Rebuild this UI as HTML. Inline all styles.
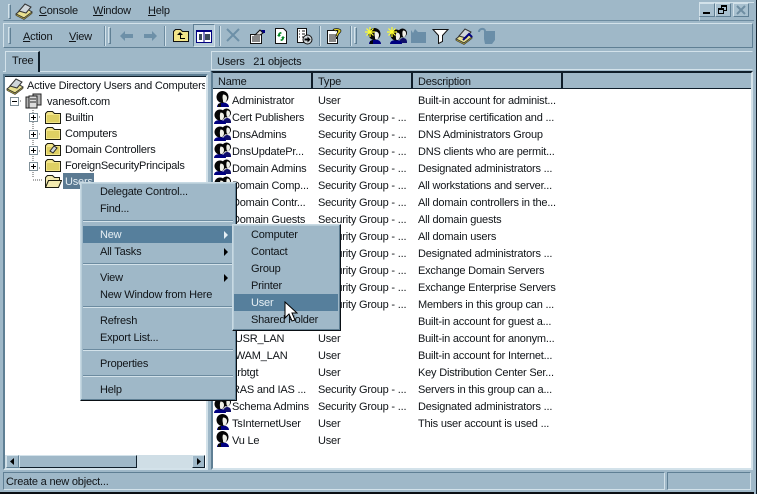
<!DOCTYPE html>
<html><head><meta charset="utf-8"><style>
html,body{margin:0;padding:0}
#r{position:relative;width:757px;height:494px;overflow:hidden;background:#9fb8c8;font:11px "Liberation Sans",sans-serif;letter-spacing:-.2px;color:#101418}
#r div,#r span,#r svg{position:absolute}
.t{line-height:14px;white-space:nowrap;margin-top:1px}
u{text-decoration:underline}
.rs{border:1px solid;border-color:#d3e2ea #5f7f94 #5f7f94 #d3e2ea;box-sizing:border-box}
.sk{border:1px solid;border-color:#5f7f94 #d3e2ea #d3e2ea #5f7f94;box-sizing:border-box}
.gr{width:3px;background:#9fb8c8;border:1px solid;border-color:#d3e2ea #5f7f94 #5f7f94 #d3e2ea;box-sizing:border-box}
.sep{width:2px;border-left:1px solid #6c8ba0;border-right:1px solid #d3e2ea;box-sizing:border-box}
.menu{background:#9fb8c8;border:1px solid;border-color:#c8dae4 #0a0f14 #0a0f14 #c8dae4;box-sizing:border-box;box-shadow:inset -1px -1px 0 #5f7f94,inset 1px 1px 0 #b9ced9}
.hs{height:2px;left:3px;border-top:1px solid #6c8ba0;border-bottom:1px solid #d3e2ea;box-sizing:border-box}
.hl{background:#567f9c}
.w{color:#e6eff4}
</style></head><body><div id="r">
<svg width="0" height="0" style="left:0;top:0"><defs>
<g id="user"><path d="M2 16c0-3 3-4.500 6-4.500s6 1.500 6 4.500z" fill="#000080"/><ellipse cx="7.500" cy="6" rx="6" ry="6" fill="#050505"/><path d="M8 3.500c2.500 0 4 1.500 4 3.500s-1 4.500-2.500 4.500S8 10.500 8 9.500 7 6.500 8 3.500z" fill="#f0f0e8"/><path d="M3 13l3-1v4H3z" fill="#050505"/></g>
<g id="group"><path d="M9 15c0-3 2-5 4-5s4 1 4 4v1z" fill="#10106a"/><ellipse cx="12.500" cy="5" rx="4.500" ry="4.500" fill="#050505"/><path d="M13 2.500c2 0 3 1 3 3s-1 3.500-2 3.500-1.500-1-1.500-2-.5-2.500.5-4.500z" fill="#f0f0e8"/><path d="M0 16c0-3 3-4 6-4s6 1 6 4z" fill="#000080"/><ellipse cx="6" cy="7" rx="5.500" ry="5.500" fill="#050505"/><path d="M6.500 4.500c2.500 0 3.500 1.500 3.500 3.500s-1 4-2.500 4S6 11 6 10 5.500 7 6.500 4.500z" fill="#f0f0e8"/></g>
<g id="folder"><path d="M1.500 14.500V4.500l2-2h5l2 2h6v10z" fill="#f2e58a" stroke="#1c1c10"/><path d="M3 6h12v7H3z" fill="#ded063"/></g>
<g id="book"><path d="M1 12L9 5l8 5-8 6z" fill="#e8e090" stroke="#333"/><path d="M4 9l6-7 6 3-5 6z" fill="#cfd6da" stroke="#333"/><path d="M1 12l8 4 8-6v1.500l-8 6-8-4z" fill="#b5a83c" stroke="#333" stroke-width=".6"/></g>
<g id="srv"><path d="M2 5h8v11H2zM9 2h8v11H9z" fill="#b4b4b4" stroke="#222"/><path d="M5 4h8v12H5z" fill="#dcdcdc" stroke="#222"/><path d="M6 7h6M6 10h6" stroke="#222"/></g>
<g id="plus"><rect x=".5" y=".5" width="8" height="8" fill="#fff" stroke="#7f8f98"/><path d="M2 4.500h5M4.500 2v5" stroke="#000"/></g>
</defs></svg>

<!-- menu band -->
<div class="rs" style="left:3px;top:2px;width:751px;height:19px;border-color:#9fb8c8 #9fb8c8 #6c8ba0 #9fb8c8"></div>
<div class="gr" style="left:8px;top:4px;height:15px"></div>
<svg style="left:15px;top:2px" width="18" height="18"><use href="#book"/></svg>
<span class="t" style="left:39px;top:3px"><u>C</u>onsole</span>
<span class="t" style="left:93px;top:3px"><u>W</u>indow</span>
<span class="t" style="left:148px;top:3px"><u>H</u>elp</span>
<!-- window buttons -->
<div class="rs" style="left:699px;top:2px;width:58px;height:19px;border-color:#d3e2ea #9fb8c8 #6c8ba0 #d3e2ea"></div>
<div class="rs" style="left:699px;top:3px;width:16px;height:14px;background:#a8c0cf"></div><div style="left:703px;top:12px;width:7px;height:2px;background:#000"></div>
<div class="rs" style="left:715px;top:3px;width:16px;height:14px;background:#a8c0cf"></div>
<div style="left:721px;top:5px;width:6px;height:6px;border:1px solid #000;border-top-width:2px;box-sizing:border-box"></div><div style="left:718px;top:8px;width:6px;height:6px;border:1px solid #000;border-top-width:2px;background:#a8c0cf;box-sizing:border-box"></div>
<div class="rs" style="left:733px;top:3px;width:16px;height:14px;background:#a8c0cf"></div>
<svg style="left:736px;top:5px" width="10" height="10"><path d="M1 1l8 8M9 1l-8 8" stroke="#6f8ea2" stroke-width="2"/></svg>

<!-- toolbar band -->
<div class="rs" style="left:3px;top:23px;width:750px;height:25px"></div>
<div class="gr" style="left:8px;top:27px;height:17px"></div>
<span class="t" style="left:23px;top:29px"><u>A</u>ction</span>
<span class="t" style="left:69px;top:29px"><u>V</u>iew</span>
<div class="sep" style="left:104px;top:26px;height:20px"></div>
<div class="gr" style="left:108px;top:27px;height:17px"></div>
<svg style="left:119px;top:29px" width="16" height="14"><path d="M1 7l5-5v3h8v4H6v3z" fill="#6d90a8"/></svg>
<svg style="left:142px;top:29px" width="16" height="14"><path d="M15 7l-5-5v3H2v4h8v3z" fill="#6d90a8"/></svg>
<div class="sep" style="left:164px;top:26px;height:20px"></div>
<svg style="left:172px;top:27px" width="18" height="18"><path d="M1.500 14.500V4.500l2-2h5l2 2h6v10z" fill="#f2e58a" stroke="#111"/><path d="M5 8l3-3 3 3H9v3h4v1H8V8z" fill="#000"/></svg>
<div style="left:193px;top:24px;width:22px;height:23px;background:#b4cad7;border:1px solid;border-color:#5f7f94 #d3e2ea #d3e2ea #5f7f94;box-sizing:border-box"></div>
<svg style="left:196px;top:30px" width="16" height="13"><rect x=".5" y=".5" width="15" height="12" fill="#fff" stroke="#000080"/><rect y="0" width="16" height="2" fill="#000080"/><path d="M3 4h3v6H3zM9 4h5v6H9z" fill="#3a4a5a"/><path d="M8 1v12" stroke="#000080"/></svg>
<div class="sep" style="left:219px;top:26px;height:20px"></div>
<svg style="left:225px;top:27px" width="16" height="16"><path d="M2 2l12 12M14 2L2 14" stroke="#6d90a8" stroke-width="2"/></svg>
<svg style="left:248px;top:27px" width="18" height="18"><path d="M2.500 7.500h11v9h-11z" fill="#fff" stroke="#111"/><path d="M7 8L12 3l3 3-3 2z" fill="#dcdcdc" stroke="#111"/><path d="M4 10h8M4 12h8M4 14h8" stroke="#111"/><path d="M13 3h4v3h-2z" fill="#000080"/></svg>
<svg style="left:273px;top:27px" width="16" height="18"><path d="M2.500 1.500h8l3 3v12h-11z" fill="#fff" stroke="#111"/><path d="M8 5a3 3 0 0 0-3 3h-1l2 2 2-2H7a1.500 1.500 0 0 1 2-1.500zM8 14a3 3 0 0 0 3-3h1l-2-2-2 2h1a1.500 1.500 0 0 1-2 1.500z" fill="#0a8a2a"/></svg>
<svg style="left:295px;top:27px" width="18" height="18"><path d="M2.500 1.500h9v14h-9z" fill="#fff" stroke="#111"/><path d="M4 4h1M7 4h3M4 7h1M7 7h3M4 10h1M7 10h2" stroke="#111"/><circle cx="12.500" cy="12.500" r="4.500" fill="#cfd6da" stroke="#111"/><path d="M9.500 11.500h3v-2l3 3-3 3v-2h-3z" fill="#000"/></svg>
<div class="sep" style="left:319px;top:26px;height:20px"></div>
<svg style="left:325px;top:27px" width="18" height="18"><path d="M2.500 3.500h10v13h-10z" fill="#fff" stroke="#111"/><path d="M4 8h7M4 10h7M4 12h7M4 14h7" stroke="#111"/><path d="M8 3c0-2 8-2 8 1 0 2-3 2-3 5h-2c0-3 2-3 2-5 0-1-2-1-2 0z" fill="#e8d820" stroke="#111" stroke-width=".7"/><rect x="11" y="10" width="2" height="2" fill="#111"/></svg>
<div class="sep" style="left:350px;top:26px;height:20px"></div>
<div class="gr" style="left:354px;top:27px;height:17px"></div>
<!-- action icons -->
<svg style="left:365px;top:27px" width="18" height="18"><use href="#user" x="2" y="1"/><path d="M5 0v10M0 5h10M1.500 1.500l7 7M8.500 1.500l-7 7" stroke="#ffff30" stroke-width="1.200"/></svg>
<svg style="left:387px;top:27px" width="20" height="18"><use href="#group" x="3" y="1"/><path d="M5 0v10M0 5h10M1.500 1.500l7 7M8.500 1.500l-7 7" stroke="#ffff30" stroke-width="1.200"/></svg>
<svg style="left:410px;top:27px" width="18" height="18"><path d="M1 16V3l2 3 2-4 3 3h8v11z" fill="#6a8ea8"/></svg>
<svg style="left:432px;top:28px" width="18" height="16"><path d="M1 1.500h15l-5.500 6v6l-4 2v-8z" fill="#fff" stroke="#111"/></svg>
<svg style="left:455px;top:27px" width="18" height="18"><use href="#book"/><path d="M8 13l6-6 3 3" stroke="#000080" stroke-width="2" fill="none"/></svg>
<svg style="left:478px;top:27px" width="18" height="18"><path d="M6 4h11v9l-3 4H7l-1-5z" fill="#6a8ea8"/><path d="M1 5c0-4 6-4 6-1" stroke="#6a8ea8" stroke-width="2" fill="none"/></svg>

<!-- Tree tab -->
<div style="left:5px;top:51px;width:35px;height:21px;border-top:1px solid #d3e2ea;border-left:1px solid #d3e2ea;border-right:2px solid #0f1e2a;box-sizing:border-box"></div>
<span class="t" style="left:12px;top:53px">Tree</span>
<div style="left:40px;top:71px;width:170px;height:1px;background:#d3e2ea"></div>
<div style="left:3px;top:71px;width:3px;height:1px;background:#d3e2ea"></div>
<!-- Tree pane -->
<div style="left:3px;top:74px;width:205px;height:396px;background:#fff;border:2px solid;border-color:#5f7f94 #d3e2ea #d3e2ea #5f7f94;box-sizing:border-box"></div>
<div style="left:5px;top:76px;width:201px;height:1px;background:#0f1e2a"></div>
<svg style="left:6px;top:77px" width="18" height="18"><use href="#book"/></svg>
<span class="t" style="left:27px;top:78px;width:178px;overflow:hidden">Active Directory Users and Computers</span>
<svg style="left:0;top:90px" width="100" height="100"><path d="M14 16v-1M33 20v68M33 27h7M33 44h7M33 61h7M33 78h7M33 90h10M14 11h8" stroke="#555" stroke-dasharray="1 1" fill="none"/></svg>
<svg style="left:10px;top:97px" width="9" height="9"><rect x=".5" y=".5" width="8" height="8" fill="#fff" stroke="#7f8f98"/><path d="M2 4.500h5" stroke="#000"/></svg>
<svg style="left:24px;top:92px" width="18" height="18"><use href="#srv"/></svg>
<span class="t" style="left:47px;top:94px">vanesoft.com</span>
<svg style="left:29px;top:113px" width="9" height="9"><use href="#plus"/></svg>
<svg style="left:44px;top:109px" width="18" height="16"><use href="#folder"/></svg>
<span class="t" style="left:65px;top:110px">Builtin</span>
<svg style="left:29px;top:130px" width="9" height="9"><use href="#plus"/></svg>
<svg style="left:44px;top:125px" width="18" height="16"><use href="#folder"/></svg>
<span class="t" style="left:65px;top:126px">Computers</span>
<svg style="left:29px;top:146px" width="9" height="9"><use href="#plus"/></svg>
<svg style="left:44px;top:141px" width="18" height="16"><use href="#folder"/><path d="M6 10l4-5 3 2-4 5z" fill="#cfd6da" stroke="#222"/></svg>
<span class="t" style="left:65px;top:142px">Domain Controllers</span>
<svg style="left:29px;top:162px" width="9" height="9"><use href="#plus"/></svg>
<svg style="left:44px;top:157px" width="18" height="16"><use href="#folder"/></svg>
<span class="t" style="left:65px;top:158px">ForeignSecurityPrincipals</span>
<svg style="left:44px;top:173px" width="18" height="16"><path d="M1.500 14.500V4.500l2-2h5l2 2h5v3h2l-3 7z" fill="#f4ebb0" stroke="#1c1c10"/><path d="M1.500 14.500l3-7h12" fill="none" stroke="#1c1c10"/></svg>
<div class="hl" style="left:63px;top:173px;width:31px;height:16px;background:#5b7a92"></div>
<span class="t w" style="left:65px;top:174px">Users</span>
<!-- Tree scrollbar -->
<div style="left:5px;top:455px;width:200px;height:13px;background:#cfdee6"></div>
<div class="rs" style="left:6px;top:455px;width:13px;height:13px;background:#9fb8c8"></div>
<svg style="left:10px;top:458px" width="5" height="7"><path d="M4 0v7L0 3.500z" fill="#000"/></svg>
<div class="rs" style="left:19px;top:455px;width:118px;height:13px;background:#9fb8c8;border-right-color:#0f1e2a;border-bottom-color:#0f1e2a"></div>
<div class="rs" style="left:192px;top:455px;width:13px;height:13px;background:#9fb8c8;border-right-color:#0f1e2a;border-bottom-color:#0f1e2a"></div>
<svg style="left:197px;top:458px" width="5" height="7"><path d="M0 0v7l4-3.500z" fill="#000"/></svg>

<!-- Right header -->
<div class="rs" style="left:211px;top:51px;width:542px;height:19px;border-color:#d3e2ea #9fb8c8 #d3e2ea #d3e2ea"></div>
<span class="t" style="left:217px;top:54px">Users&nbsp;&nbsp;&nbsp;21 objects</span>
<!-- List -->
<div style="left:211px;top:71px;width:542px;height:399px;background:#fff;border:2px solid;border-color:#0f1e2a #d3e2ea #d3e2ea #5f7f94;box-sizing:border-box"></div>
<div style="left:213px;top:73px;width:538px;height:15px;background:#9fb8c8"></div>
<div style="left:213px;top:88px;width:538px;height:1px;background:#0f1e2a"></div>
<div style="left:311px;top:73px;width:2px;height:15px;background:#0f1e2a"></div>
<div style="left:411px;top:73px;width:2px;height:15px;background:#0f1e2a"></div>
<div style="left:561px;top:73px;width:2px;height:15px;background:#0f1e2a"></div>
<span class="t" style="left:218px;top:74px">Name</span>
<span class="t" style="left:318px;top:74px">Type</span>
<span class="t" style="left:418px;top:74px">Description</span>

<svg style="left:215px;top:91px" width="17" height="17"><use href="#user"/></svg>
<span class="t" style="left:232px;top:93px">Administrator</span><span class="t" style="left:318px;top:93px">User</span><span class="t" style="left:418px;top:93px">Built-in account for administ...</span>
<svg style="left:214px;top:108px" width="18" height="17"><use href="#group"/></svg>
<span class="t" style="left:232px;top:110px">Cert Publishers</span><span class="t" style="left:318px;top:110px">Security Group - ...</span><span class="t" style="left:418px;top:110px">Enterprise certification and ...</span>
<svg style="left:214px;top:125px" width="18" height="17"><use href="#group"/></svg>
<span class="t" style="left:232px;top:127px">DnsAdmins</span><span class="t" style="left:318px;top:127px">Security Group - ...</span><span class="t" style="left:418px;top:127px">DNS Administrators Group</span>
<svg style="left:214px;top:142px" width="18" height="17"><use href="#group"/></svg>
<span class="t" style="left:232px;top:144px">DnsUpdatePr...</span><span class="t" style="left:318px;top:144px">Security Group - ...</span><span class="t" style="left:418px;top:144px">DNS clients who are permit...</span>
<svg style="left:214px;top:159px" width="18" height="17"><use href="#group"/></svg>
<span class="t" style="left:232px;top:161px">Domain Admins</span><span class="t" style="left:318px;top:161px">Security Group - ...</span><span class="t" style="left:418px;top:161px">Designated administrators ...</span>
<svg style="left:214px;top:176px" width="18" height="17"><use href="#group"/></svg>
<span class="t" style="left:232px;top:178px">Domain Comp...</span><span class="t" style="left:318px;top:178px">Security Group - ...</span><span class="t" style="left:418px;top:178px">All workstations and server...</span>
<span class="t" style="left:232px;top:195px">Domain Contr...</span><span class="t" style="left:318px;top:195px">Security Group - ...</span><span class="t" style="left:418px;top:195px">All domain controllers in the...</span>
<span class="t" style="left:232px;top:212px">Domain Guests</span><span class="t" style="left:318px;top:212px">Security Group - ...</span><span class="t" style="left:418px;top:212px">All domain guests</span>
<span class="t" style="left:318px;top:229px">Security Group - ...</span><span class="t" style="left:418px;top:229px">All domain users</span>
<span class="t" style="left:318px;top:246px">Security Group - ...</span><span class="t" style="left:418px;top:246px">Designated administrators ...</span>
<span class="t" style="left:318px;top:263px">Security Group - ...</span><span class="t" style="left:418px;top:263px">Exchange Domain Servers</span>
<span class="t" style="left:318px;top:280px">Security Group - ...</span><span class="t" style="left:418px;top:280px">Exchange Enterprise Servers</span>
<span class="t" style="left:318px;top:297px">Security Group - ...</span><span class="t" style="left:418px;top:297px">Members in this group can ...</span>
<span class="t" style="left:318px;top:314px">User</span><span class="t" style="left:418px;top:314px">Built-in account for guest a...</span>
<span class="t" style="left:232px;top:331px">IUSR_LAN</span><span class="t" style="left:318px;top:331px">User</span><span class="t" style="left:418px;top:331px">Built-in account for anonym...</span>
<span class="t" style="left:232px;top:348px">IWAM_LAN</span><span class="t" style="left:318px;top:348px">User</span><span class="t" style="left:418px;top:348px">Built-in account for Internet...</span>
<span class="t" style="left:232px;top:365px">krbtgt</span><span class="t" style="left:318px;top:365px">User</span><span class="t" style="left:418px;top:365px">Key Distribution Center Ser...</span>
<span class="t" style="left:232px;top:382px">RAS and IAS ...</span><span class="t" style="left:318px;top:382px">Security Group - ...</span><span class="t" style="left:418px;top:382px">Servers in this group can a...</span>
<svg style="left:214px;top:397px" width="18" height="17"><use href="#group"/></svg>
<span class="t" style="left:232px;top:399px">Schema Admins</span><span class="t" style="left:318px;top:399px">Security Group - ...</span><span class="t" style="left:418px;top:399px">Designated administrators ...</span>
<svg style="left:215px;top:414px" width="17" height="17"><use href="#user"/></svg>
<span class="t" style="left:232px;top:416px">TsInternetUser</span><span class="t" style="left:318px;top:416px">User</span><span class="t" style="left:418px;top:416px">This user account is used ...</span>
<svg style="left:215px;top:431px" width="17" height="17"><use href="#user"/></svg>
<span class="t" style="left:232px;top:433px">Vu Le</span><span class="t" style="left:318px;top:433px">User</span>

<!-- Status bar -->
<div class="sk" style="left:3px;top:472px;width:662px;height:18px"></div>
<div class="sk" style="left:667px;top:472px;width:84px;height:18px"></div>
<div style="left:0;top:492px;width:757px;height:2px;background:#0a0f14"></div>
<span class="t" style="left:6px;top:474px">Create a new object...</span>
<div style="left:754px;top:0;width:3px;height:494px;background:#9fb8c8;border-right:1px solid #0f1e2a;box-sizing:border-box"></div>

<!-- Context menu -->
<div class="menu" style="left:80px;top:182px;width:157px;height:219px"></div>
<span class="t" style="left:100px;top:184px">Delegate Control...</span>
<span class="t" style="left:100px;top:201px">Find...</span>
<div class="hs" style="left:83px;top:220px;width:150px"></div>
<div class="hl" style="left:83px;top:226px;width:149px;height:17px"></div>
<span class="t w" style="left:100px;top:227px">New</span>
<svg style="left:224px;top:231px" width="5" height="8"><path d="M0 0v8l4-4z" fill="#e6eff4"/></svg>
<span class="t" style="left:100px;top:244px">All Tasks</span>
<svg style="left:224px;top:248px" width="5" height="8"><path d="M0 0v8l4-4z" fill="#000"/></svg>
<div class="hs" style="left:83px;top:263px;width:150px"></div>
<span class="t" style="left:100px;top:270px">View</span>
<svg style="left:224px;top:274px" width="5" height="8"><path d="M0 0v8l4-4z" fill="#000"/></svg>
<span class="t" style="left:100px;top:287px">New Window from Here</span>
<div class="hs" style="left:83px;top:306px;width:150px"></div>
<span class="t" style="left:100px;top:313px">Refresh</span>
<span class="t" style="left:100px;top:330px">Export List...</span>
<div class="hs" style="left:83px;top:349px;width:150px"></div>
<span class="t" style="left:100px;top:356px">Properties</span>
<div class="hs" style="left:83px;top:375px;width:150px"></div>
<span class="t" style="left:100px;top:382px">Help</span>

<!-- Submenu -->
<div class="menu" style="left:232px;top:224px;width:109px;height:107px"></div>
<span class="t" style="left:251px;top:227px">Computer</span>
<span class="t" style="left:251px;top:244px">Contact</span>
<span class="t" style="left:251px;top:261px">Group</span>
<span class="t" style="left:251px;top:278px">Printer</span>
<div class="hl" style="left:234px;top:294px;width:104px;height:17px"></div>
<span class="t w" style="left:251px;top:295px">User</span>
<span class="t" style="left:251px;top:312px">Shared Folder</span>
<svg style="left:284px;top:301px" width="14" height="22"><path d="M1 1v16l4-4 3 7 3-1-3-7h5z" fill="#fff" stroke="#000"/></svg>
</div></body></html>
